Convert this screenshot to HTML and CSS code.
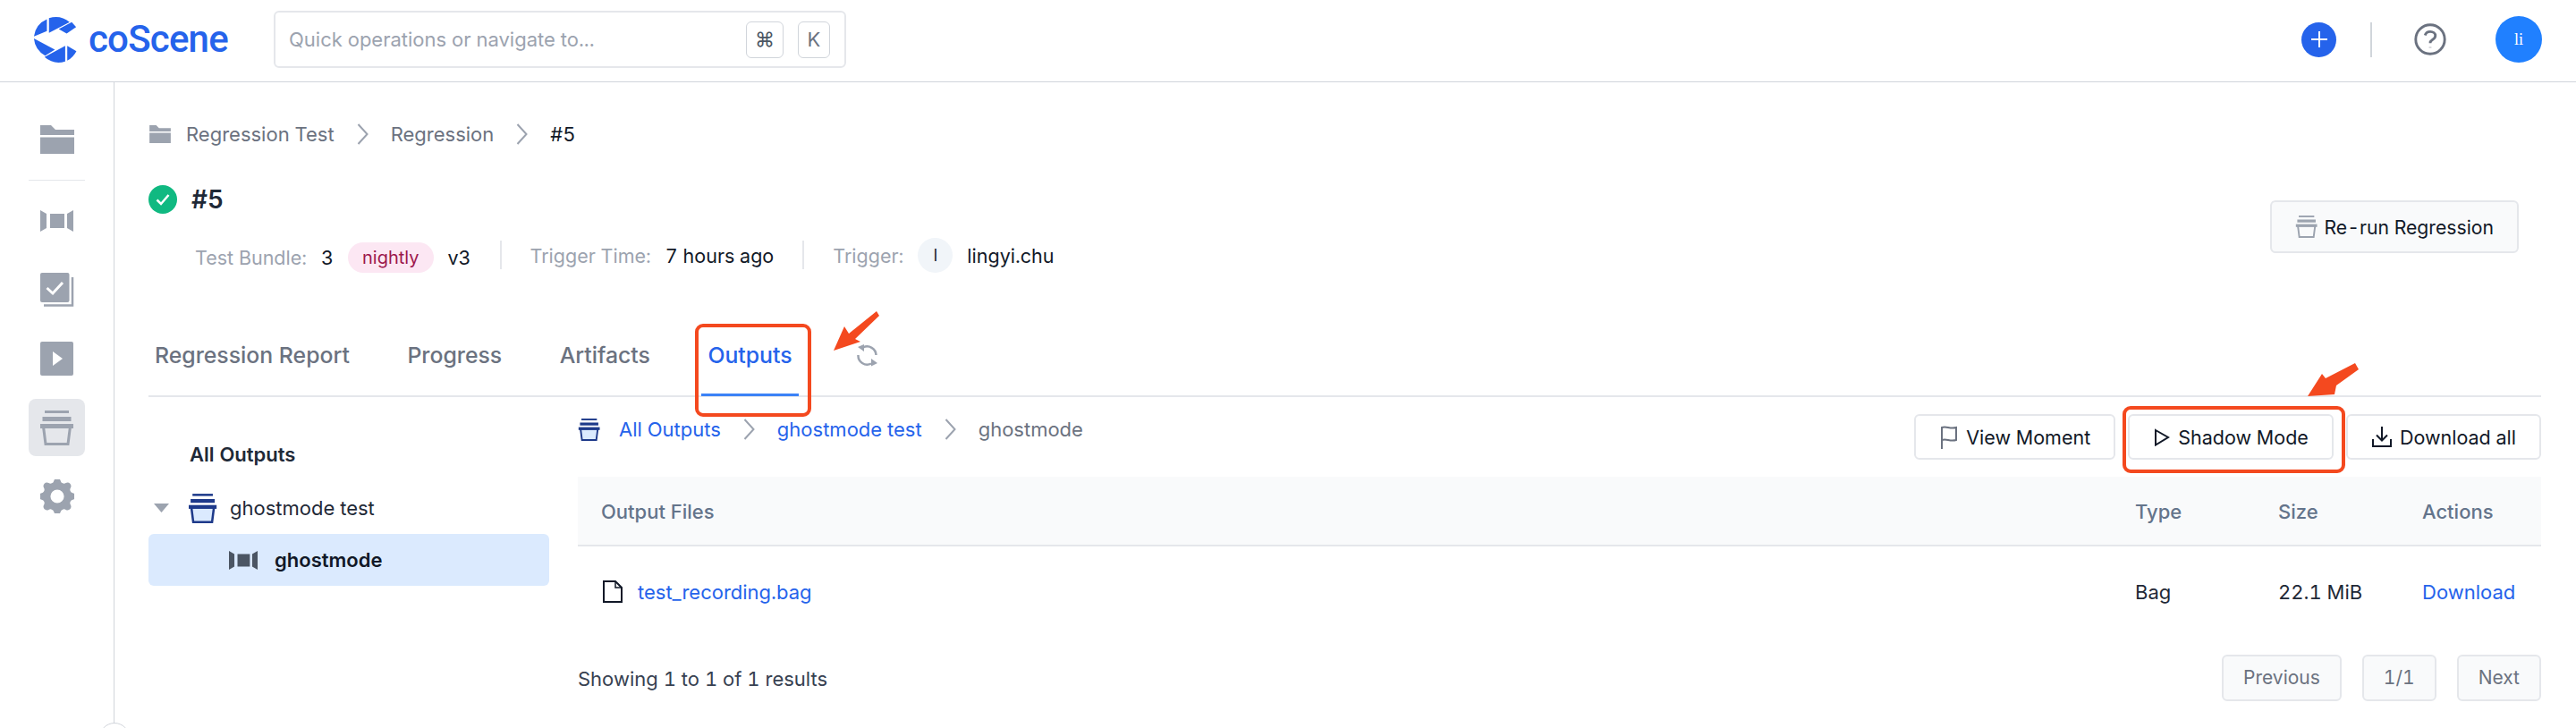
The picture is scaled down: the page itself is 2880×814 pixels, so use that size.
FILE: index.html
```html
<!DOCTYPE html>
<html lang="en">
<head>
  <meta charset="UTF-8" />
  <title>coScene - Regression #5</title>
  <link rel="stylesheet" href="styles.css">
</head>
<body>
  <svg class="sprite" width="0" height="0">
    <symbol id="bucket" viewBox="0 0 38 39">
      <rect x="5" y="0" width="27" height="3" fill="currentColor"/>
      <rect x="2.500" y="7" width="32" height="5" fill="currentColor"/>
      <path d="M3.500 18 L6 37.500 H31 L33.500 18 Z" stroke="currentColor" stroke-width="3" />
      <rect x="0" y="15" width="37" height="5" fill="currentColor"/>
    </symbol>
    <symbol id="camera" viewBox="0 0 37 24">
      <path d="M0 0 L7 4 V20 L0 24 Z M37 0 L30 4 V20 L37 24 Z M11 4 H27 V20 H11 Z" fill="currentColor"/>
    </symbol>
    <symbol id="chevron" viewBox="0 0 13 24">
      <path d="M1.500 1 L11.500 12 L1.500 23" fill="none" stroke="currentColor" stroke-width="2"/>
    </symbol>
  </svg>

  <!-- Top bar -->
  <header class="topbar">
    <a class="brand">
      <svg class="brand-mark" viewBox="0 0 200 200">
        <path d="M68 32 A74 74 0 0 0 24 90 L68 72 Z M75 28 A74 74 0 0 1 145 42 L75 78 Z M108 65 L152 42 L167 58 L135 80 Z M24 97 L95 135 L62 155 A74 74 0 0 1 24 97 Z M60 160 L130 122 V175 A74 74 0 0 1 60 160 Z M137 122 L168 140 A74 74 0 0 1 137 172 Z" fill="#2563eb"/>
      </svg>
      <span class="brand-name">coScene</span>
    </a>
    <div class="search">
      <span class="search-text">Quick operations or navigate to...</span>
      <kbd class="key key-cmd">⌘</kbd>
      <kbd class="key key-k">K</kbd>
    </div>
    <div class="topbar-right">
      <button class="plus-btn">
        <svg width="20" height="20" viewBox="0 0 20 20"><path d="M10 1 V19 M1 10 H19" stroke="#fff" stroke-width="2"/></svg>
      </button>
      <span class="topbar-sep"></span>
      <svg class="help-icon" viewBox="2 2 20 20" fill="none" stroke="#6b7280" stroke-width="1.600"><path d="M21 12a9 9 0 11-18 0 9 9 0 0118 0z"/><path d="M8.800 9.500c.4-1.400 1.700-2.300 3.200-2.300 1.800 0 3.200 1.100 3.200 2.600 0 1.300-1 2-2 2.600-.8.500-1.200 1-1.200 1.900m0 2.600v.300"/></svg>
      <span class="avatar">li</span>
    </div>
  </header>

  <div class="layout">
    <!-- Left icon rail -->
    <nav class="rail">
      <a class="rail-item">
        <svg width="38" height="32" viewBox="0 0 38 32"><path d="M0 0 H12 L17 5 H38 V11 H0 Z M0 13.500 H38 V32 H0 Z" fill="currentColor"/></svg>
      </a>
      <span class="rail-sep"></span>
      <a class="rail-item"><svg width="37" height="24"><use href="#camera"/></svg></a>
      <a class="rail-item">
        <svg width="38" height="38" viewBox="0 0 38 38"><rect width="32.500" height="33" rx="2" fill="currentColor"/><path d="M7.500 17 L14 23 L25 11" fill="none" stroke="#fff" stroke-width="3"/><path d="M4 36.500 H36 V5" fill="none" stroke="currentColor" stroke-width="2.500"/></svg>
      </a>
      <a class="rail-item">
        <svg width="37" height="38" viewBox="0 0 37 38"><rect width="37" height="38" rx="2" fill="currentColor"/><path d="M14 11 L25 19 L14 27 Z" fill="#fff"/></svg>
      </a>
      <a class="rail-item active"><svg class="bucket-gray" width="38" height="39"><use href="#bucket"/></svg></a>
      <a class="rail-item">
        <svg width="38" height="38" viewBox="2.500 2.500 15 15"><path fill="currentColor" fill-rule="evenodd" d="M11.490 3.170c-.380-1.560-2.600-1.560-2.980 0a1.532 1.532 0 01-2.286.948c-1.372-.836-2.942.734-2.106 2.106.540.886.061 2.042-.947 2.287-1.561.379-1.561 2.600 0 2.978a1.532 1.532 0 01.947 2.287c-.836 1.372.734 2.942 2.106 2.106a1.532 1.532 0 012.287.947c.379 1.561 2.600 1.561 2.978 0a1.533 1.533 0 012.287-.947c1.372.836 2.942-.734 2.106-2.106a1.533 1.533 0 01.947-2.287c1.561-.379 1.561-2.600 0-2.978a1.532 1.532 0 01-.947-2.287c.836-1.372-.734-2.942-2.106-2.106a1.532 1.532 0 01-2.287-.947zM10 13a3 3 0 100-6 3 3 0 000 6z"/></svg>
      </a>
      <span class="rail-toggle"></span>
    </nav>

    <main class="content">
      <div class="crumbs">
        <svg class="crumb-folder" width="26" height="20" viewBox="0 0 38 32"><path d="M0 0 H12 L17 5 H38 V11 H0 Z M0 13.500 H38 V32 H0 Z" fill="currentColor"/></svg>
        <span>Regression Test</span>
        <svg class="chev" width="13" height="24"><use href="#chevron"/></svg>
        <span>Regression</span>
        <svg class="chev" width="13" height="24"><use href="#chevron"/></svg>
        <span class="crumb-current">#5</span>
      </div>

      <section class="run-head">
        <div>
          <div class="run-title">
            <svg width="32" height="32" viewBox="0 0 32 32"><circle cx="16" cy="16" r="16" fill="#10b981"/><path d="M9.500 16.500 L14 21 L22.500 11" fill="none" stroke="#fff" stroke-width="2.500"/></svg>
            <h1>#5</h1>
          </div>
          <div class="run-meta">
            <div class="meta-group">
              <span class="meta-label">Test Bundle:</span>
              <span>3</span>
              <span class="pill">nightly</span>
              <span>v3</span>
            </div>
            <span class="meta-sep"></span>
            <div class="meta-group up">
              <span class="meta-label">Trigger Time:</span>
              <span>7 hours ago</span>
            </div>
            <span class="meta-sep"></span>
            <div class="meta-group up">
              <span class="meta-label">Trigger:</span>
              <span class="user-dot">l</span>
              <span class="user-name">lingyi.chu</span>
            </div>
          </div>
        </div>
        <button class="btn btn-rerun">
          <svg class="bucket-gray" width="26" height="25"><use href="#bucket"/></svg>
          Re-run Regression
        </button>
      </section>

      <div class="tabs">
        <a class="tab">Regression Report</a>
        <a class="tab">Progress</a>
        <a class="tab">Artifacts</a>
        <a class="tab active">Outputs</a>
        <svg class="refresh" width="25" height="25" viewBox="0 0 25 25" fill="none" stroke="#9ca3af" stroke-width="2.500">
          <path d="M8 3.500 A10 10 0 0 1 22.500 12"/>
          <path d="M17 21.500 A10 10 0 0 1 2.500 12"/>
          <path d="M2 3 L9 0 V8 Z M24 21 L17 24.500 V16 Z" fill="#9ca3af" stroke="none"/>
        </svg>
      </div>

      <div class="outputs">
        <aside class="tree">
          <div class="tree-title">All Outputs</div>
          <div class="tree-row">
            <svg class="tree-caret" width="17" height="10" viewBox="0 0 17 10"><path d="M0 0 H17 L8.500 10 Z" fill="#9ca3af"/></svg>
            <svg class="bucket-blue" width="32" height="33"><use href="#bucket"/></svg>
            <span>ghostmode test</span>
          </div>
          <div class="tree-row selected">
            <svg class="tree-cam" width="32" height="21"><use href="#camera"/></svg>
            <span>ghostmode</span>
          </div>
        </aside>

        <div class="files">
          <div class="files-bar">
            <div class="crumbs crumbs-files">
              <svg class="bucket-blue" width="26" height="25"><use href="#bucket"/></svg>
              <a class="link">All Outputs</a>
              <svg class="chev" width="13" height="24"><use href="#chevron"/></svg>
              <a class="link">ghostmode test</a>
              <svg class="chev" width="13" height="24"><use href="#chevron"/></svg>
              <span>ghostmode</span>
            </div>
            <div class="actions">
              <button class="btn">
                <svg width="20" height="26" viewBox="0 0 20 26" fill="none" stroke="#6b7280" stroke-width="2"><path d="M2 26 V2 C7 0 11 4 18 2 V16 C11 18 7 14 2 16"/></svg>
                View Moment
              </button>
              <button class="btn">
                <svg width="18" height="20" viewBox="0 0 18 20" fill="none" stroke="#111827" stroke-width="2"><path d="M2 2 L16 10 L2 18.500 Z"/></svg>
                Shadow Mode
              </button>
              <button class="btn">
                <svg width="22" height="23" viewBox="0 0 22 23" fill="none" stroke="#111827" stroke-width="2"><path d="M11 0 V15 M5 9.500 L11 15.500 L17 9.500 M1 14 V22 H21 V14"/></svg>
                Download all
              </button>
            </div>
          </div>

          <table class="file-table">
            <colgroup>
              <col class="col-name"><col class="col-type"><col class="col-size"><col class="col-act">
            </colgroup>
            <thead>
              <tr><th>Output Files</th><th>Type</th><th>Size</th><th>Actions</th></tr>
            </thead>
            <tbody>
              <tr>
                <td>
                  <div class="file-name">
                    <svg width="22" height="25" viewBox="0 0 22 25" fill="none" stroke="#111827" stroke-width="2"><path d="M1 1 H14 L21 8 V24 H1 Z"/><path d="M14 1 V8 H21" stroke-width="1.500"/></svg>
                    <a class="link">test_recording.bag</a>
                  </div>
                </td>
                <td>Bag</td>
                <td>22.1 MiB</td>
                <td><a class="link">Download</a></td>
              </tr>
            </tbody>
          </table>

          <div class="files-foot">
            <span class="result-count">Showing 1 to 1 of 1 results</span>
            <div class="pager">
              <button class="page-btn">Previous</button>
              <button class="page-btn">1/1</button>
              <button class="page-btn">Next</button>
            </div>
          </div>
        </div>
      </div>
    </main>
  </div>

  <!-- Red annotations drawn over the screenshot -->
  <svg class="marks" width="2880" height="814" viewBox="0 0 2880 814">
    <rect x="779" y="364" width="126" height="100" rx="7" fill="none" stroke="#f4491f" stroke-width="4"/>
    <rect x="2375" y="456" width="245" height="71" rx="7" fill="none" stroke="#f4491f" stroke-width="4"/>
    <polygon points="980,348 983,353 956,379 962,382 932,392 944,365 949,373" fill="#f4491f"/>
    <polygon points="2633,406 2637,413 2612,431 2610,441 2580,443 2596,418 2600,423" fill="#f4491f"/>
  </svg>
</body>
</html>
```

FILE: styles.css
```css
* {
  box-sizing: border-box;
}
body {
  margin: 0;
  width: 2880px;
  height: 814px;
  overflow: hidden;
  position: relative;
  background: #fff;
  font-family: Inter, 'Noto Sans', sans-serif;
  font-size: 22px;
  line-height: 32px;
  font-variant-numeric: tabular-nums;
  color: #111827;
}
button {
  font: inherit;
  color: inherit;
}
.sprite {
  position: absolute;
}
.marks {
  position: absolute;
  left: 0;
  top: 0;
  pointer-events: none;
}
.bucket-gray {
  color: #9ca3af;
  fill: none;
}
.bucket-blue {
  color: #1e3a8a;
  fill: #dbeafe;
}

/* top bar */
.topbar {
  height: 92px;
  padding: 0 38px 3px 30px;
  display: flex;
  align-items: center;
  border-bottom: 1px solid #d1d5db;
}
.brand {
  width: 276px;
  display: flex;
  align-items: center;
  gap: 3px;
}
.brand-mark {
  width: 66px;
  height: 66px;
}
.brand-name {
  font-family: Roboto, sans-serif;
  font-size: 42px;
  font-weight: 500;
  line-height: 50px;
  letter-spacing: -0.8px;
  color: #2563eb;
}
.search {
  width: 640px;
  height: 64px;
  padding: 0 16px 0 15px;
  display: flex;
  align-items: center;
  border: 2px solid #e5e7eb;
  border-radius: 6px;
}
.search-text {
  flex: 1;
  color: #9ca3af;
}
.key {
  height: 41px;
  display: flex;
  align-items: center;
  justify-content: center;
  border: 1px solid #d1d5db;
  border-radius: 6px;
  font-family: inherit;
  color: #6b7280;
}
.key-cmd {
  width: 42px;
  margin-right: 16px;
  color: #4b5563;
}
.key-k {
  width: 36px;
}
.topbar-right {
  margin-left: auto;
  display: flex;
  align-items: center;
}
.plus-btn {
  width: 39px;
  height: 39px;
  padding: 0;
  display: flex;
  align-items: center;
  justify-content: center;
  border: none;
  border-radius: 50%;
  background: #2563eb;
}
.topbar-sep {
  width: 2px;
  height: 39px;
  margin: 0 47px 0 38px;
  background: #d1d5db;
}
.help-icon {
  width: 36px;
  height: 36px;
  margin-right: 55px;
}
.avatar {
  width: 52px;
  height: 52px;
  display: flex;
  align-items: center;
  justify-content: center;
  border-radius: 50%;
  background: #2080ff;
  color: #fff;
  font-family: 'Liberation Serif', serif;
  font-size: 18px;
}

/* layout */
.layout {
  display: flex;
  height: 722px;
}
.rail {
  width: 128px;
  flex: none;
  padding: 32px 32px 0;
  position: relative;
  display: flex;
  flex-direction: column;
  gap: 13px;
  border-right: 1px solid #d1d5db;
  color: #9ca3af;
}
.rail-item {
  height: 64px;
  display: flex;
  align-items: center;
  justify-content: center;
  border-radius: 8px;
}
.rail-item.active {
  background: #e5e7eb;
}
.rail-sep {
  height: 1px;
  background: #e5e7eb;
}
.rail-toggle {
  position: absolute;
  right: -18px;
  top: 716px;
  width: 34px;
  height: 34px;
  border: 1px solid #d1d5db;
  border-radius: 50%;
  background: #fff;
}
.content {
  flex: 1;
  min-width: 0;
  padding: 42px 39px 0 38px;
}

/* breadcrumbs */
.crumbs {
  height: 32px;
  display: flex;
  align-items: center;
  gap: 25px;
  color: #6b7280;
}
.crumb-folder {
  color: #9ca3af;
  margin-right: -9px;
}
.crumb-current {
  color: #111827;
}
.chev {
  color: #9ca3af;
}
.crumbs-files {
  margin-top: 1px;
}
.crumbs-files .bucket-blue {
  margin-right: -5px;
}
.link {
  color: #2563eb;
}

/* run header */
.run-head {
  margin-top: 41px;
  display: flex;
  justify-content: space-between;
  align-items: flex-start;
}
.run-title {
  height: 32px;
  display: flex;
  align-items: center;
  gap: 16px;
}
.run-title h1 {
  margin: 0;
  font-size: 28px;
  font-weight: 600;
  color: #1f2937;
}
.run-meta {
  margin: 29px 0 0 52px;
  height: 39px;
  display: flex;
  align-items: center;
  font-size: 21.500px;
}
.meta-group {
  display: flex;
  align-items: center;
  gap: 16px;
}
.meta-group.up {
  margin-top: -4px;
}
.meta-label {
  color: #9ca3af;
}
.pill {
  height: 34px;
  padding: 0 16px;
  display: flex;
  align-items: center;
  border-radius: 17px;
  background: #fce7f3;
  color: #9d174d;
  font-size: 20px;
}
.meta-sep {
  width: 2px;
  height: 32px;
  margin: -6px 32px 0;
  background: #e5e7eb;
}
.user-dot {
  width: 39px;
  height: 39px;
  display: flex;
  align-items: center;
  justify-content: center;
  border-radius: 50%;
  background: #f1f5f9;
  font-size: 18px;
}
.btn {
  height: 51px;
  padding: 0 26px 0 27px;
  display: flex;
  align-items: center;
  gap: 9px;
  background: #fff;
  border: 2px solid #e5e7eb;
  border-radius: 6px;
  font-size: 21.500px;
  font-weight: 400;
  white-space: nowrap;
}
.btn-rerun {
  height: 59px;
  margin: 17px 25px 0 0;
  padding: 0 26px;
  gap: 7px;
  font-size: 21.200px;
  background: #f9fafb;
}

/* tabs */
.tabs {
  margin-top: 74px;
  height: 63px;
  display: flex;
  align-items: flex-start;
  gap: 50.500px;
  border-bottom: 2px solid #e5e7eb;
}
.tab {
  height: 62px;
  padding: 0 7px;
  font-size: 24.800px;
  font-weight: 500;
  color: #6b7280;
}
.tab.active {
  color: #2563eb;
  border-bottom: 3px solid #3b82f6;
}
.refresh {
  margin: 4px 0 0 14px;
}

/* outputs panel */
.outputs {
  display: flex;
  gap: 32px;
}
.tree {
  width: 448px;
  flex: none;
  padding-top: 48px;
}
.tree-title {
  padding-left: 46px;
  margin-bottom: 15px;
  font-weight: 600;
  color: #1f2937;
}
.tree-row {
  height: 58px;
  padding-left: 6px;
  display: flex;
  align-items: center;
  color: #1f2937;
}
.tree-caret {
  margin-right: 22px;
}
.tree-row .bucket-blue {
  margin-right: 14px;
}
.tree-row.selected {
  padding-left: 90px;
  background: #dbeafe;
  border-radius: 6px;
  font-weight: 600;
  color: #111827;
}
.tree-cam {
  margin-right: 19px;
  color: #4b5563;
}
.files {
  flex: 1;
  min-width: 0;
  padding-top: 19px;
}
.files-bar {
  display: flex;
  justify-content: space-between;
  margin-bottom: 19px;
}
.actions {
  display: flex;
  gap: 14px;
}
.file-table {
  width: 100%;
  table-layout: fixed;
  border-collapse: collapse;
}
.col-type {
  width: 160px;
}
.col-size {
  width: 161px;
}
.col-act {
  width: 159px;
}
.file-table th {
  height: 77px;
  padding: 2px 0 0 26px;
  text-align: left;
  font-weight: 500;
  color: #64748b;
  background: #f9fafb;
  border-bottom: 2px solid #e5e7eb;
}
.file-table td {
  height: 102px;
  padding: 0 0 0 26px;
  color: #1f2937;
}
.file-name {
  display: flex;
  align-items: center;
  gap: 17px;
  padding-left: 2px;
}
.files-foot {
  margin-top: 20px;
  display: flex;
  justify-content: space-between;
  align-items: center;
}
.result-count {
  color: #374151;
  padding-top: 2px;
}
.pager {
  display: flex;
  gap: 23px;
}
.page-btn {
  height: 52px;
  padding: 0 22px;
  background: #f9fafb;
  border: 2px solid #e5e7eb;
  border-radius: 6px;
  color: #6b7280;
  font-size: 21px;
}
```
